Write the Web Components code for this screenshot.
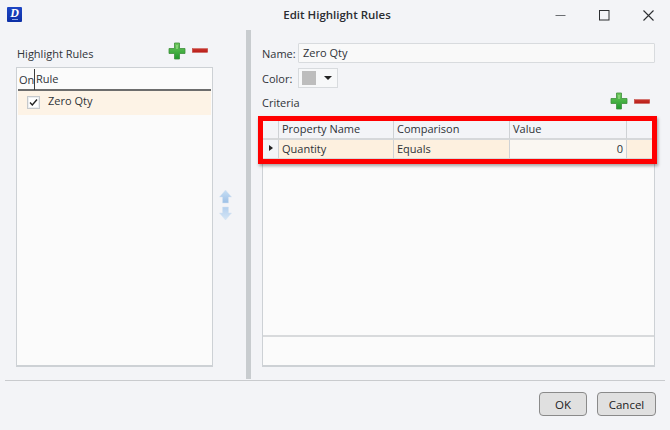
<!DOCTYPE html>
<html><head><meta charset="utf-8"><style>
html,body{margin:0;padding:0;background:#f3f4f7}
body{font:11px "Open Sans","Noto Sans",sans-serif;color:#2f3338;width:670px;height:430px;overflow:hidden}
</style></head><body>
<hl-dialog></hl-dialog>
<script>
const def=(n,html)=>customElements.define(n,class extends HTMLElement{constructor(){super();this.attachShadow({mode:'open'}).innerHTML=html}});
const grad=(id,a,b)=>`<linearGradient id="${id}" x1="0" y1="0" x2="0" y2="1"><stop offset="0" stop-color="${a}"/><stop offset="1" stop-color="${b}"/></linearGradient>`;
def('hl-addremove',`<style>:host{display:flex;align-items:center;gap:6px}svg{display:block}</style>
<svg width="18" height="18" viewBox="0 0 18 18"><defs>${grad('g','#6fc85c','#1f9a2c')}</defs><path d="M6.500 1h5v5.500h5.500v5h-5.500v5.500h-5v-5.500h-5.500v-5h5.500z" fill="url(#g)" stroke="#3f8f3c" stroke-width=".8"/><path d="M8 3h2v4h-2z" fill="#9fe08e" opacity=".6"/></svg>
<svg width="16" height="5" viewBox="0 0 16 5"><defs>${grad('r','#c9342c','#b81c18')}</defs><rect x=".3" y=".6" width="15.400" height="3.800" fill="url(#r)" stroke="#c4473f" stroke-width=".5"/></svg>`);
def('hl-titlebar',`<style>:host{display:flex;align-items:center;height:30px;flex:none}
.logo{margin-left:7px;width:15px;height:15px;background:linear-gradient(#1d46c4,#0c2fa6);border-radius:1px;position:relative;text-align:center;color:#fff;font:italic bold 12px/12px "Liberation Serif",serif;margin-top:-1px}
.logo::after{content:"";position:absolute;left:5px;right:4px;bottom:2px;height:1px;background:#8fa6e6}
.title{flex:1;text-align:center;font-weight:600;font-size:11.500px;color:#2a2d31;padding-left:114px;margin-top:-1px}
.btns{display:flex}
.btn{width:44px;height:30px;display:flex;align-items:center;justify-content:center}
svg{display:block}</style>
<div class="logo">D</div><div class="title">Edit Highlight Rules</div>
<div class="btns">
<div class="btn"><svg width="11" height="11" viewBox="0 0 11 11"><path d="M0.500 5.500h10" stroke="#6b6e72" stroke-width="1"/></svg></div>
<div class="btn"><svg width="11" height="11" viewBox="0 0 11 11"><rect x=".5" y=".5" width="9.500" height="9.500" fill="none" stroke="#2c2e31"/></svg></div>
<div class="btn"><svg width="11" height="11" viewBox="0 0 11 11"><path d="M.5.500l10 10M10.500.500l-10 10" stroke="#2c2e31" stroke-width="1.100"/></svg></div>
</div>`);
def('hl-left',`<style>:host{display:flex;flex-direction:column;width:197px;margin-left:16px;flex:none}
.head{display:flex;align-items:center;height:37px;flex:none;justify-content:space-between}
.head span{margin-top:10px;margin-left:1px}
hl-addremove{margin-right:5px;margin-top:4px}
.list{flex:1;background:#fbfbfb;border:1px solid #cdd1d5;border-bottom-width:2px;padding:0 1px;display:flex;flex-direction:column;margin-bottom:12px}
.hdr{height:21px;flex:none;border-bottom:2px solid #6d6d6d;display:flex;align-items:center;line-height:20px}
.on{width:15px;padding-left:1px;border-right:1px solid #3c3c3c;height:21px;line-height:21px;flex:none;margin-top:1px}
.rule{padding-left:1px}
.row{height:24px;flex:none;background:#fdf3e6;display:flex;align-items:flex-start}
.cb{width:11px;height:11px;border:1px solid #c6c9cc;background:#fff;margin:5px 0 0 9px;box-shadow:0 0 0 1px #eceef0 inset;display:flex;align-items:center;justify-content:center;flex:none}
.name{margin-left:8px;line-height:20px}
</style>
<div class="head"><span>Highlight Rules</span><hl-addremove></hl-addremove></div>
<div class="list"><div class="hdr"><div class="on">On</div><div class="rule">Rule</div></div>
<div class="row"><div class="cb"><svg width="9" height="9" viewBox="0 0 9 9"><path d="M1 4.500l2.300 2.500L8 1.500" fill="none" stroke="#222" stroke-width="1.400"/></svg></div><div class="name">Zero Qty</div></div></div>`);
def('hl-updown',`<style>:host{display:flex;flex-direction:column;align-items:center;gap:2px;width:33px;flex:none;justify-content:center;padding:1px 8px 0 0;box-sizing:border-box}svg{display:block}</style>
<svg width="13" height="15" viewBox="0 0 13 15"><defs>${grad('u','#c8dff5','#9dc0e6')}</defs><path d="M6.500 1L12.500 8H9.500V14H3.500V8H.5z" fill="url(#u)" stroke="#d4e2f0" stroke-width=".5"/></svg>
<svg width="13" height="15" viewBox="0 0 13 15"><defs>${grad('d','#b4d0ee','#d6e6f6')}</defs><path d="M3.500 1H9.500V7H12.500L6.500 14L.5 7H3.500z" fill="url(#d)" stroke="#d4e2f0" stroke-width=".5"/></svg>`);
def('hl-grid',`<style>:host{display:flex;flex-direction:column;flex:1;background:#fbfbfb;border:1px solid #cdd1d5;border-bottom-width:2px;position:relative;margin-bottom:12px}
.r{display:grid;grid-template-columns:16px 115px 116px 117px 1fr;flex:none}
.r>div{border-right:1px solid #cfd2d5;border-bottom:2px solid #d6d8da;padding-left:3px;box-sizing:border-box;white-space:nowrap;overflow:hidden}
.r>div:last-child{border-right:0}
.h{height:19px;background:#f3f4f7;line-height:15px}.b{height:20px;background:#fdf0df;line-height:18px}
.b .val{background:#faf7f2;text-align:right;padding-right:3px}
.mk{padding:0!important;display:flex;align-items:center;justify-content:center;background:#f3f4f7}
.mk i{display:block;width:0;height:0;border-left:4px solid #222;border-top:3.500px solid transparent;border-bottom:3.500px solid transparent;margin-bottom:2px}
.fill{flex:1}.foot{height:28px;flex:none;border-top:2px solid #d8dadc}
.mark{position:absolute;left:-5px;top:-5px;width:389px;height:38px;border:5px solid #f00;box-shadow:1px 2px 3px rgba(0,0,0,.35)}
</style>
<div class="r h"><div></div><div>Property Name</div><div>Comparison</div><div>Value</div><div></div></div>
<div class="r b"><div class="mk"><i></i></div><div>Quantity</div><div>Equals</div><div class="val">0</div><div></div></div>
<div class="fill"></div><div class="foot"></div><div class="mark"></div>`);
def('hl-right',`<style>:host{display:flex;flex-direction:column;flex:1;padding:0 15px 0 11px;min-width:0}
.f{display:flex;align-items:center;height:20px;flex:none}
.lab{width:36px;flex:none;white-space:nowrap}
.in{flex:1;height:18px;background:#f9f9f9;border:1px solid #d8dbde;line-height:18px;padding-left:4px;border-radius:1px}
.color{width:38px;height:18px;border:1px solid #d8dbde;display:flex;align-items:center;background:#f7f8f9;flex:none}
.sw{width:14px;height:14px;background:#bdbdbd;margin-left:3px}
.ar{width:0;height:0;border-left:4px solid transparent;border-right:4px solid transparent;border-top:4px solid #222;margin-left:8px}
.crit{display:flex;justify-content:space-between;height:32px;flex:none;align-items:flex-start}
.crit span{margin-top:7px}
hl-addremove{margin-right:5px;margin-top:4px}
</style>
<div class="f" style="margin-top:13px"><div class="lab">Name:</div><div class="in">Zero Qty</div></div>
<div class="f" style="margin-top:5px"><div class="lab">Color:</div><div class="color"><div class="sw"></div><div class="ar"></div></div></div>
<div class="crit"><span>Criteria</span><hl-addremove></hl-addremove></div>
<hl-grid></hl-grid>`);
def('hl-button',`<style>:host{display:inline-flex;align-items:center;justify-content:center;height:22px;background:#e0e0e0;border:1px solid #8a8a8a;border-radius:4px;font-weight:500;font-size:11.500px;color:#1c1c1c}</style><slot></slot>`);
def('hl-dialog',`<style>:host{display:flex;flex-direction:column;width:670px;height:430px}
.main{display:flex;height:349px;flex:none}
.split{width:5px;background:#c8cccf;flex:none}
.sep{height:1px;margin:1px 5px 0;background:#c9cbce;flex:none}
.foot{display:flex;justify-content:flex-end;gap:10px;padding:11px 14px 0 0}
hl-button:first-child{width:46px}hl-button:last-child{width:57px}
</style>
<hl-titlebar></hl-titlebar>
<div class="main"><hl-left></hl-left><hl-updown></hl-updown><div class="split"></div><hl-right></hl-right></div>
<div class="sep"></div>
<div class="foot"><hl-button>OK</hl-button><hl-button>Cancel</hl-button></div>`);
</script>
</body></html>
